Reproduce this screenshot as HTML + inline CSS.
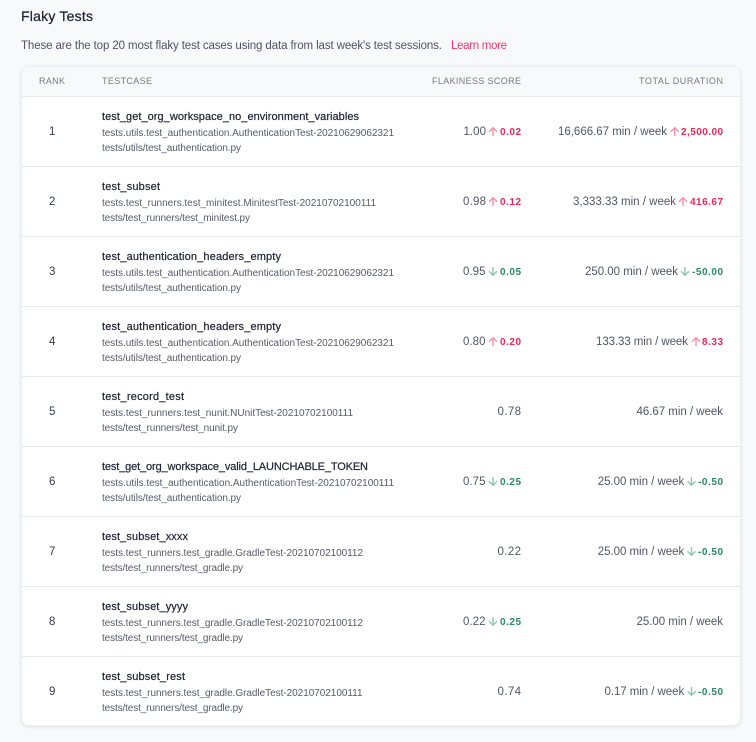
<!DOCTYPE html>
<html lang="en">
<head>
<meta charset="utf-8">
<title>Flaky Tests</title>
<style>
html,body{margin:0;padding:0;width:756px;height:742px;overflow:hidden;background:#f8f9fb}
.card{position:absolute;left:21px;top:66px;width:720px;height:660px;box-sizing:border-box;background:#fff;border:1px solid #eceef2;border-radius:8px;box-shadow:0 1px 3px rgba(30,40,60,.12)}
svg{position:absolute;left:0;top:0}
text{font-family:"Liberation Sans",sans-serif}
.t{font-size:14px;fill:#1c2230;stroke:#1c2230;stroke-width:.25px}
.d{font-size:11.5px;fill:#4d5361}
.l{font-size:11.5px;fill:#f0386b}
.h{font-size:9px;fill:#737986}
.r{font-size:11.5px;fill:#343a47}
.n{font-size:11px;fill:#1c2230;stroke:#1c2230;stroke-width:.2px}
.s{font-size:10px;fill:#555b68}
.v{font-size:11.5px;fill:#505664}
.up{font-size:10px;font-weight:bold;fill:#ee2558}
.dn{font-size:10px;font-weight:bold;fill:#2a8a60}
.au{fill:none;stroke:#fb8ea8;stroke-width:1.4}
.ad{fill:none;stroke:#8cc8aa;stroke-width:1.4}
</style>
</head>
<body>
<div class="card"></div>
<svg width="756" height="742" viewBox="0 0 756 742" xmlns="http://www.w3.org/2000/svg">
<defs>
<path id="u" class="au" d="M0 4.3V-4M-4 0L0 -4L4 0"/>
<path id="w" class="ad" d="M0 -4.3V4M-4 0L0 4L4 0"/>
</defs>
<text class="t" x="21" y="21" textLength="72">Flaky Tests</text>
<text class="d" x="21" y="49" textLength="421">These are the top 20 most flaky test cases using data from last week's test sessions.</text>
<text class="l" x="451" y="49" textLength="56">Learn more</text>

<path d="M22 96V75a8 8 0 0 1 8-8H732a8 8 0 0 1 8 8V96Z" fill="#f8f9fb"/>
<g fill="#e6e8ed">
<rect x="22" y="96" width="718" height="1"/>
<rect x="22" y="166" width="718" height="1"/>
<rect x="22" y="236" width="718" height="1"/>
<rect x="22" y="306" width="718" height="1"/>
<rect x="22" y="376" width="718" height="1"/>
<rect x="22" y="446" width="718" height="1"/>
<rect x="22" y="516" width="718" height="1"/>
<rect x="22" y="586" width="718" height="1"/>
<rect x="22" y="656" width="718" height="1"/>
</g>

<text class="h" x="39" y="84" textLength="26">RANK</text>
<text class="h" x="102" y="84" textLength="50">TESTCASE</text>
<text class="h" x="432" y="84" textLength="89">FLAKINESS SCORE</text>
<text class="h" x="639" y="84" textLength="84">TOTAL DURATION</text>

<!-- row 1 -->
<text class="r" x="49" y="135" textLength="6">1</text>
<text class="n" x="102" y="120" textLength="257">test_get_org_workspace_no_environment_variables</text>
<text class="s" x="102" y="136" textLength="292">tests.utils.test_authentication.AuthenticationTest-20210629062321</text>
<text class="s" x="102" y="151" textLength="139">tests/utils/test_authentication.py</text>
<text class="v" x="463.5" y="135" textLength="22.5">1.00</text>
<use href="#u" x="493" y="131.7"/>
<text class="up" x="500" y="135" textLength="21">0.02</text>
<text class="v" x="558" y="135" textLength="109">16,666.67 min / week</text>
<use href="#u" x="674.7" y="131.7"/>
<text class="up" x="681" y="135" textLength="42">2,500.00</text>

<!-- row 2 -->
<text class="r" x="49" y="205" textLength="6.5">2</text>
<text class="n" x="102" y="190" textLength="58">test_subset</text>
<text class="s" x="102" y="206" textLength="274">tests.test_runners.test_minitest.MinitestTest-20210702100111</text>
<text class="s" x="102" y="221" textLength="148">tests/test_runners/test_minitest.py</text>
<text class="v" x="463" y="205" textLength="23">0.98</text>
<use href="#u" x="493" y="201.7"/>
<text class="up" x="500" y="205" textLength="21">0.12</text>
<text class="v" x="573" y="205" textLength="103">3,333.33 min / week</text>
<use href="#u" x="683" y="201.7"/>
<text class="up" x="690" y="205" textLength="33">416.67</text>

<!-- row 3 -->
<text class="r" x="49" y="275" textLength="6.5">3</text>
<text class="n" x="102" y="260" textLength="179">test_authentication_headers_empty</text>
<text class="s" x="102" y="276" textLength="292">tests.utils.test_authentication.AuthenticationTest-20210629062321</text>
<text class="s" x="102" y="291" textLength="139">tests/utils/test_authentication.py</text>
<text class="v" x="463" y="275" textLength="22.5">0.95</text>
<use href="#w" x="493" y="271.3"/>
<text class="dn" x="500" y="275" textLength="21">0.05</text>
<text class="v" x="585" y="275" textLength="93">250.00 min / week</text>
<use href="#w" x="685" y="271.3"/>
<text class="dn" x="692" y="275" textLength="31">-50.00</text>

<!-- row 4 -->
<text class="r" x="49" y="345" textLength="6.5">4</text>
<text class="n" x="102" y="330" textLength="179">test_authentication_headers_empty</text>
<text class="s" x="102" y="346" textLength="292">tests.utils.test_authentication.AuthenticationTest-20210629062321</text>
<text class="s" x="102" y="361" textLength="139">tests/utils/test_authentication.py</text>
<text class="v" x="463" y="345" textLength="22.5">0.80</text>
<use href="#u" x="493" y="341.7"/>
<text class="up" x="500" y="345" textLength="21">0.20</text>
<text class="v" x="596" y="345" textLength="92">133.33 min / week</text>
<use href="#u" x="696" y="341.7"/>
<text class="up" x="702" y="345" textLength="21">8.33</text>

<!-- row 5 -->
<text class="r" x="49" y="415" textLength="6.5">5</text>
<text class="n" x="102" y="400" textLength="82">test_record_test</text>
<text class="s" x="102" y="416" textLength="251">tests.test_runners.test_nunit.NUnitTest-20210702100111</text>
<text class="s" x="102" y="431" textLength="136">tests/test_runners/test_nunit.py</text>
<text class="v" x="497.5" y="415" textLength="23.5">0.78</text>
<text class="v" x="636.5" y="415" textLength="86.5">46.67 min / week</text>

<!-- row 6 -->
<text class="r" x="49" y="485" textLength="6.5">6</text>
<text class="n" x="102" y="470" textLength="266">test_get_org_workspace_valid_LAUNCHABLE_TOKEN</text>
<text class="s" x="102" y="486" textLength="292">tests.utils.test_authentication.AuthenticationTest-20210702100111</text>
<text class="s" x="102" y="501" textLength="139">tests/utils/test_authentication.py</text>
<text class="v" x="463" y="485" textLength="22.5">0.75</text>
<use href="#w" x="493" y="481.3"/>
<text class="dn" x="500" y="485" textLength="21">0.25</text>
<text class="v" x="597.7" y="485" textLength="86.5">25.00 min / week</text>
<use href="#w" x="691.5" y="481.3"/>
<text class="dn" x="698" y="485" textLength="25">-0.50</text>

<!-- row 7 -->
<text class="r" x="49" y="555" textLength="6.5">7</text>
<text class="n" x="102" y="540" textLength="86">test_subset_xxxx</text>
<text class="s" x="102" y="556" textLength="261">tests.test_runners.test_gradle.GradleTest-20210702100112</text>
<text class="s" x="102" y="571" textLength="141">tests/test_runners/test_gradle.py</text>
<text class="v" x="497.5" y="555" textLength="23.5">0.22</text>
<text class="v" x="597.7" y="555" textLength="86.5">25.00 min / week</text>
<use href="#w" x="691.5" y="551.3"/>
<text class="dn" x="698" y="555" textLength="25">-0.50</text>

<!-- row 8 -->
<text class="r" x="49" y="625" textLength="6.5">8</text>
<text class="n" x="102" y="610" textLength="86">test_subset_yyyy</text>
<text class="s" x="102" y="626" textLength="261">tests.test_runners.test_gradle.GradleTest-20210702100112</text>
<text class="s" x="102" y="641" textLength="141">tests/test_runners/test_gradle.py</text>
<text class="v" x="463" y="625" textLength="22.5">0.22</text>
<use href="#w" x="493" y="621.3"/>
<text class="dn" x="500" y="625" textLength="21">0.25</text>
<text class="v" x="636.5" y="625" textLength="86.5">25.00 min / week</text>

<!-- row 9 -->
<text class="r" x="49" y="695" textLength="6.5">9</text>
<text class="n" x="102" y="680" textLength="83">test_subset_rest</text>
<text class="s" x="102" y="696" textLength="260.5">tests.test_runners.test_gradle.GradleTest-20210702100111</text>
<text class="s" x="102" y="711" textLength="141">tests/test_runners/test_gradle.py</text>
<text class="v" x="497.5" y="695" textLength="23.5">0.74</text>
<text class="v" x="604.5" y="695" textLength="79.7">0.17 min / week</text>
<use href="#w" x="691.5" y="691.3"/>
<text class="dn" x="698" y="695" textLength="25">-0.50</text>
</svg>
</body>
</html>
